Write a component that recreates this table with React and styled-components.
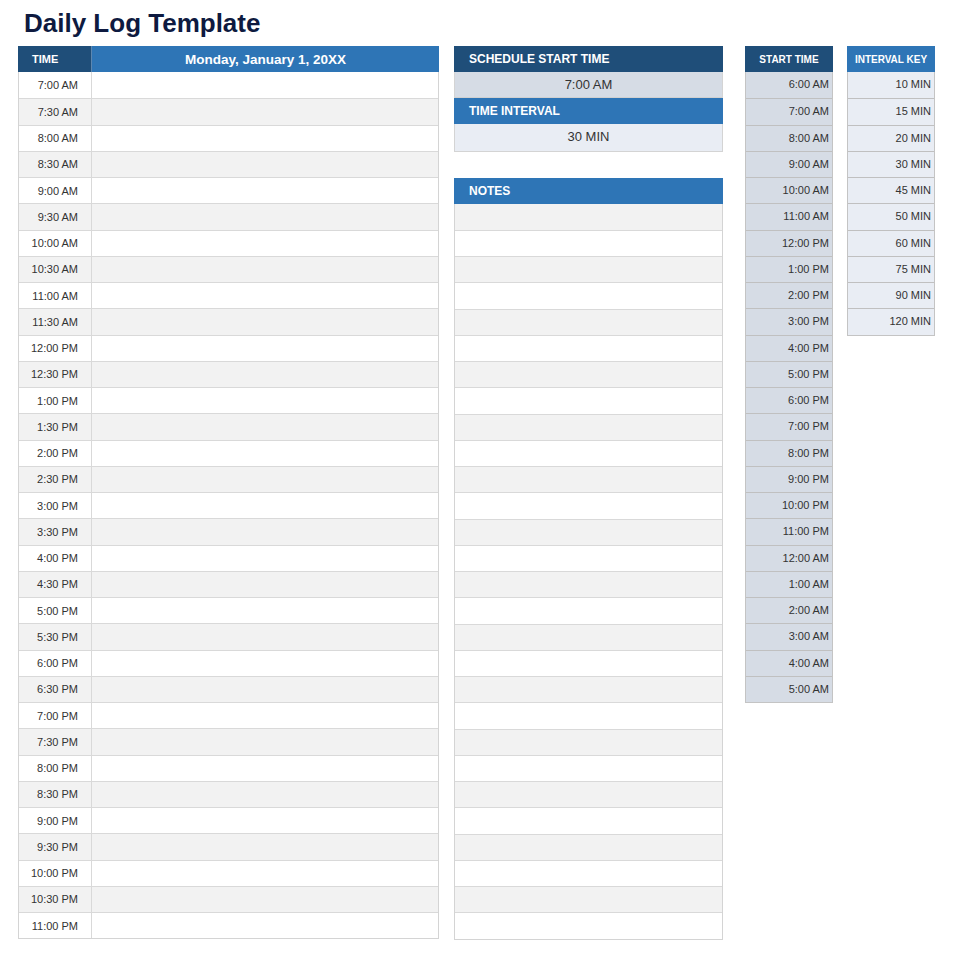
import styled, { createGlobalStyle } from "styled-components";

const GlobalStyle = createGlobalStyle`
  body {
    margin: 0;
    background: #ffffff;
    font-family: "Liberation Sans", Arial, sans-serif;
  }
`;

const ROW = 26.25;

const logTimes = [];
for (let m = 7 * 60; m <= 23 * 60; m += 30) {
  const h = Math.floor(m / 60);
  const min = m % 60;
  const hh = h % 12 === 0 ? 12 : h % 12;
  logTimes.push(`${hh}:${min === 0 ? "00" : "30"} ${h < 12 ? "AM" : "PM"}`);
}

const startTimes = [];
for (let i = 0; i < 24; i++) {
  const h = (6 + i) % 24;
  const hh = h % 12 === 0 ? 12 : h % 12;
  startTimes.push(`${hh}:00 ${h < 12 ? "AM" : "PM"}`);
}

const intervals = [10, 15, 20, 30, 45, 50, 60, 75, 90, 120];

export default function App() {
  return (
    <Page>
      <GlobalStyle />
      <Title>Daily Log Template</Title>
      <Columns>
        <LogTable>
          <HeadRow>
            <TimeHead>TIME</TimeHead>
            <DayHead>Monday, January 1, 20XX</DayHead>
          </HeadRow>
          {logTimes.map((t, i) => (
            <LogRow key={t} $alt={i % 2 === 1}>
              <TimeCell>{t}</TimeCell>
              <EntryCell />
            </LogRow>
          ))}
        </LogTable>

        <SideColumn>
          <Panel>
            <PanelHead $tone="dark">SCHEDULE START TIME</PanelHead>
            <PanelValue $bg="#d6dce5">7:00 AM</PanelValue>
            <PanelHead $tone="mid">TIME INTERVAL</PanelHead>
            <PanelValue $bg="#e9edf4">30 MIN</PanelValue>
          </Panel>
          <Panel>
            <PanelHead $tone="mid">NOTES</PanelHead>
            {Array.from({ length: 28 }).map((_, i) => (
              <NoteRow key={i} $alt={i % 2 === 0} />
            ))}
          </Panel>
        </SideColumn>

        <KeyColumn>
          <KeyHead $tone="dark">START TIME</KeyHead>
          {startTimes.map((t) => (
            <KeyCell key={t} $bg="#d6dce5">
              {t}
            </KeyCell>
          ))}
        </KeyColumn>

        <KeyColumn>
          <KeyHead $tone="mid">INTERVAL KEY</KeyHead>
          {intervals.map((n) => (
            <KeyCell key={n} $bg="#e9edf4">
              {n} MIN
            </KeyCell>
          ))}
        </KeyColumn>
      </Columns>
    </Page>
  );
}

const tones = {
  dark: "#1f4e79",
  mid: "#2e75b6",
};

const Page = styled.div`
  padding: 6px 0 0 18px;
  width: 957px;
  box-sizing: border-box;
`;

const Title = styled.h1`
  margin: 0 0 0 6px;
  height: 40px;
  line-height: 34px;
  font-size: 26px;
  font-weight: 700;
  color: #0e1a40;
`;

const Columns = styled.div`
  display: flex;
  align-items: flex-start;
`;

const LogTable = styled.div`
  width: 421px;
  border: 1px solid #d4d4d4;
  border-top: none;
  box-sizing: border-box;
`;

const HeadRow = styled.div`
  display: flex;
  height: 26px;
  margin: 0 -1px;
`;

const TimeHead = styled.div`
  width: 74px;
  flex: none;
  background: ${tones.dark};
  color: #fff;
  font-size: 11px;
  font-weight: 700;
  line-height: 26px;
  padding-left: 14px;
  box-sizing: border-box;
  border-right: 1px solid #5d87b0;
`;

const DayHead = styled.div`
  flex: 1;
  background: ${tones.mid};
  color: #fff;
  font-size: 13.5px;
  font-weight: 700;
  text-align: center;
  line-height: 27px;
`;

const LogRow = styled.div`
  display: flex;
  height: ${ROW}px;
  box-sizing: border-box;
  border-top: 1px solid #d9d9d9;
  background: ${(p) => (p.$alt ? "#f2f2f2" : "#ffffff")};
  &:nth-child(2) {
    border-top: none;
  }
`;

const TimeCell = styled.div`
  width: 73px;
  flex: none;
  border-right: 1px solid #d9d9d9;
  font-size: 11px;
  color: #333;
  padding-right: 13px;
  box-sizing: border-box;
  display: flex;
  align-items: center;
  justify-content: flex-end;
`;

const EntryCell = styled.div`
  flex: 1;
`;

const SideColumn = styled.div`
  margin-left: 15px;
  width: 269px;
  display: flex;
  flex-direction: column;
  gap: 26px;
`;

const Panel = styled.div`
  border: 1px solid #d4d4d4;
  border-top: none;
  display: flex;
  flex-direction: column;
`;

const PanelHead = styled.div`
  height: 26px;
  margin: 0 -1px;
  background: ${(p) => tones[p.$tone]};
  color: #fff;
  font-size: 12px;
  font-weight: 700;
  line-height: 26px;
  padding-left: 15px;
`;

const PanelValue = styled.div`
  height: 26.3px;
  background: ${(p) => p.$bg};
  color: #333;
  font-size: 13px;
  text-align: center;
  line-height: 26px;
  border-bottom: 1px solid #d0d0d0;
  box-sizing: border-box;
  &:last-child {
    border-bottom: none;
  }
`;

const NoteRow = styled.div`
  height: ${ROW}px;
  box-sizing: border-box;
  border-top: 1px solid #d9d9d9;
  background: ${(p) => (p.$alt ? "#f2f2f2" : "#ffffff")};
  &:nth-child(2) {
    border-top: none;
  }
`;

const KeyColumn = styled.div`
  width: 88px;
  border: 1px solid #c4c4c4;
  border-top: none;
  box-sizing: border-box;
  & + & {
    margin-left: 14px;
  }
  &:nth-child(3) {
    margin-left: 22px;
  }
`;

const KeyHead = styled.div`
  height: 26px;
  margin: 0 -1px;
  background: ${(p) => tones[p.$tone]};
  color: #fff;
  font-size: 10px;
  font-weight: 700;
  text-align: center;
  line-height: 27px;
`;

const KeyCell = styled.div`
  height: ${ROW}px;
  box-sizing: border-box;
  border-top: 1px solid #c0c0c0;
  background: ${(p) => p.$bg};
  font-size: 11px;
  color: #333;
  text-align: right;
  padding-right: 3px;
  line-height: ${ROW - 1}px;
  &:nth-child(2) {
    border-top: none;
  }
`;
